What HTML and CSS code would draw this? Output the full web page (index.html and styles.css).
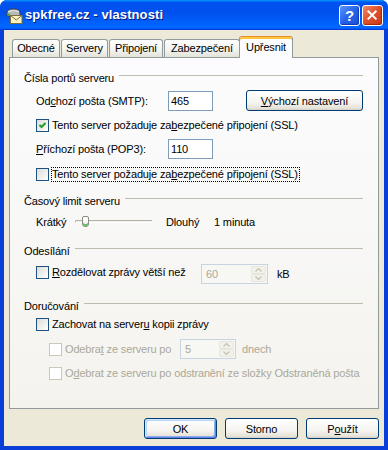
FILE: index.html
```html
<!DOCTYPE html>
<html lang="cs">
<head>
  <meta charset="UTF-8" />
  <title>spkfree.cz - vlastnosti</title>
  <link rel="stylesheet" href="styles.css">
</head>
<body>
  <div class="window">
    <div class="titlebar">
      <svg class="app-icon" viewBox="0 0 18 17">
        <path d="M2 6 Q2 2 8.5 2 Q15 2 15 6 L15 9 L2 9 Z" fill="#b9b9b9" stroke="#404040" stroke-width="1"/>
        <path d="M3 4.5 Q8.5 2.5 14 4.5" fill="none" stroke="#eeeeee" stroke-width="1"/>
        <rect x="3" y="6.5" width="2" height="1.5" fill="#19c819"/>
        <rect x="5.5" y="8.5" width="11.5" height="8" fill="#fbf3c0" stroke="#7d6f3a" stroke-width="1"/>
        <path d="M5.5 8.5 L11.25 13 L17 8.5" fill="none" stroke="#7d6f3a" stroke-width="1"/>
      </svg>
      <span class="title">spkfree.cz - vlastnosti</span>
      <div class="caption">
        <div class="cap cap-help">?</div>
        <div class="cap cap-close">
          <svg viewBox="0 0 21 21"><path d="M6 6 L14 14 M14 6 L6 14" stroke="#fff" stroke-width="2.2" stroke-linecap="square"/></svg>
        </div>
      </div>
    </div>

    <div class="frame">
      <div class="tabs">
        <div class="tab tab-general">Obecné</div>
        <div class="tab tab-servers">Servery</div>
        <div class="tab tab-conn">Připojení</div>
        <div class="tab tab-sec">Zabezpečení</div>
        <div class="tab tab-active">Upřesnit</div>
      </div>

      <div class="panel">
        <div class="group">
          <div class="group-title">Čísla portů serveru</div>
          <div class="row row-smtp">
            <span class="field-label">Od<u>c</u>hozí pošta (SMTP):</span>
            <input class="textbox port" value="465">
            <button class="btn btn-defaults"><u>V</u>ýchozí nastavení</button>
          </div>
          <div class="row check-row gap7">
            <span class="cb checked">
              <svg viewBox="0 0 11 11"><path d="M2.5 5 L4.5 7 L8.5 3" fill="none" stroke="#21a121" stroke-width="2"/></svg>
            </span>
            <span class="cb-label">Tento server požaduje za<u>b</u>ezpečené připojení (SSL)</span>
          </div>
          <div class="row row-pop">
            <span class="field-label"><u>P</u>říchozí pošta (POP3):</span>
            <input class="textbox port" value="110">
          </div>
          <div class="row check-row gap8">
            <span class="cb"></span>
            <span class="cb-label focus">Tento server požaduje za<u>b</u>ezpečené připojení (SSL)</span>
          </div>
        </div>

        <div class="group group-timeout">
          <div class="group-title">Časový limit serveru</div>
          <div class="row row-slider">
            <span class="slider-min">Krátký</span>
            <div class="slider">
              <div class="slider-track"></div>
              <div class="slider-thumb"></div>
            </div>
            <span class="slider-max">Dlouhý</span>
            <span>1 minuta</span>
          </div>
        </div>

        <div class="group group-send">
          <div class="group-title">Odesílání</div>
          <div class="row row-split">
            <div class="check-inline split-check">
              <span class="cb"></span>
              <span class="cb-label"><u>R</u>ozdělovat zprávy větší než</span>
            </div>
            <div class="spinner spinner-split">
              <input class="spin-input" value="60" disabled>
              <div class="spin-buttons">
                <span class="spin-btn"><svg viewBox="0 0 7 4"><path d="M0.5 3.5 L3.5 0.5 L6.5 3.5" fill="none" stroke="#c3c1b6" stroke-width="1.2"/></svg></span>
                <span class="spin-btn"><svg viewBox="0 0 7 4"><path d="M0.5 0.5 L3.5 3.5 L6.5 0.5" fill="none" stroke="#c3c1b6" stroke-width="1.2"/></svg></span>
              </div>
            </div>
            <span class="unit unit-kb">kB</span>
          </div>
        </div>

        <div class="group group-deliver">
          <div class="group-title">Doručování</div>
          <div class="row check-row gap5">
            <span class="cb"></span>
            <span class="cb-label">Zachovat na server<u>u</u> kopii zprávy</span>
          </div>
          <div class="row row-remove">
            <div class="check-inline remove-check">
              <span class="cb disabled"></span>
              <span class="cb-label disabled-text">Odebra<u>t</u> ze serveru po</span>
            </div>
            <div class="spinner spinner-days">
              <input class="spin-input" value="5" disabled>
              <div class="spin-buttons">
                <span class="spin-btn"><svg viewBox="0 0 7 4"><path d="M0.5 3.5 L3.5 0.5 L6.5 3.5" fill="none" stroke="#c3c1b6" stroke-width="1.2"/></svg></span>
                <span class="spin-btn"><svg viewBox="0 0 7 4"><path d="M0.5 0.5 L3.5 3.5 L6.5 0.5" fill="none" stroke="#c3c1b6" stroke-width="1.2"/></svg></span>
              </div>
            </div>
            <span class="unit disabled-text">dnech</span>
          </div>
          <div class="row check-row gap7 sub-row">
            <span class="cb disabled"></span>
            <span class="cb-label disabled-text">O<u>d</u>ebrat ze serveru po odstranění ze složky Odstraněná pošta</span>
          </div>
        </div>
      </div>

      <div class="dialog-buttons">
        <button class="btn btn-default">OK</button>
        <button class="btn">Storno</button>
        <button class="btn">P<u>o</u>užít</button>
      </div>
    </div>
  </div>
</body>
</html>
```

FILE: styles.css
```css
* { box-sizing: border-box; }
body { margin: 0; background: #fff; font-family: "Liberation Sans", Arial, sans-serif; font-size: 11px; letter-spacing: -0.15px; color: #000; }
u { text-decoration: underline; text-underline-offset: 1px; }

.window { width: 388px; height: 450px; display: flex; flex-direction: column; background: #0a3ed8; border-radius: 7px 7px 0 0; overflow: hidden; }
.titlebar { height: 30px; flex: none; display: flex; align-items: center; padding: 0 5px 0 5px; background: linear-gradient(180deg, #0997ff, #0053ee 8%, #0050ee 40%, #06f 88%, #06f 93%, #005bff 95%, #003dd7 96%, #003dd7); }
.app-icon { width: 18px; height: 17px; margin-right: 2px; flex: none; }
.title { flex: 1; color: #fff; font-weight: bold; font-size: 13px; letter-spacing: 0.1px; text-shadow: 1px 1px #0a1883; padding-bottom: 1px; }
.caption { display: flex; gap: 2px; }
.cap { width: 21px; height: 21px; border: 1px solid #fff; border-radius: 3px; display: flex; align-items: center; justify-content: center; color: #fff; }
.cap-help { background: linear-gradient(135deg, #5a93fb, #2663e8 50%, #1c4fd8); font: bold 15px "Liberation Sans", Arial, sans-serif; box-shadow: inset -1px -1px 1px #1036b8; }
.cap-close { background: linear-gradient(135deg, #ef8a6c, #e0532f 45%, #c83a18); box-shadow: inset -1px -1px 1px #a02a0c; }
.cap-close svg { width: 21px; height: 21px; }

.frame { flex: 1; margin: 0 4px 4px; background: #ece9d8; padding: 6px 5px 0 5px; display: flex; flex-direction: column; }

.tabs { display: flex; align-items: flex-end; height: 22px; margin: 0 0 -1px 3px; position: relative; z-index: 1; }
.tab { height: 18px; margin: 0 1px 1px 0; border: 1px solid #919b9c; border-bottom: none; border-radius: 3px 3px 0 0; background: linear-gradient(#fff, #f3f3ef 60%, #e3e2da); display: flex; align-items: center; justify-content: center; padding-bottom: 1px; }
.tab-general { width: 48px; }
.tab-servers { width: 47px; }
.tab-conn { width: 54px; }
.tab-sec { width: 76px; margin-right: -1px; }
.tab-active { width: 54px; height: 22px; margin: 0; background: #fcfcfe; border-top: 1px solid #e68b2c; box-shadow: inset 0 2px #ffc73c; border-radius: 3px 3px 0 0; padding-bottom: 2px; }

.panel { height: 352px; border: 1px solid #919b9c; background: linear-gradient(#fcfcfe, #f4f3ee); padding: 13px 15px 0 14px; }

.group-title { display: flex; align-items: center; height: 13px; }
.group-title::after { content: ""; flex: 1; border-top: 1px solid #bdbcb0; margin: -4px 0 0 5px; }
.group-timeout { margin-top: 12px; }
.group-send { margin-top: 12px; }
.group-deliver { margin-top: 15px; }

.row { display: flex; align-items: center; padding-left: 12px; }
.row-smtp { height: 21px; margin-top: 6px; }
.row-pop { height: 20px; margin-top: 6px; }
.check-row { height: 15px; }
.gap5 { margin-top: 5px; }
.gap7 { margin-top: 7px; }
.gap8 { margin-top: 8px; }
.sub-row { padding-left: 25px; }

.field-label { width: 132px; flex: none; }
.textbox { width: 45px; height: 20px; border: 1px solid #7f9db9; background: #fff; padding: 0 0 0 2px; font: inherit; letter-spacing: inherit; color: #000; outline: none; }

.btn { width: 73px; height: 21px; border: 1px solid #003c74; border-radius: 3px; background: linear-gradient(#fff, #f5f4f0 60%, #e6e3da 90%, #d6d0c5); font: inherit; letter-spacing: inherit; color: #000; padding: 0; }
.btn-defaults { width: 117px; margin-left: auto; }
.btn-default { box-shadow: inset 1px 1px #cee7ff, inset -1px -1px #6982ee, inset 2px 2px #bcd4f6, inset -2px -2px #89ade4; }

.cb { width: 13px; height: 13px; flex: none; border: 1px solid #1c5180; background: linear-gradient(135deg, #dcdcd7, #fff); display: flex; }
.cb svg { width: 11px; height: 11px; }
.cb.disabled { border-color: #cac8bb; background: #fff; }
.cb-label { margin-left: 3px; line-height: 13px; }
.cb-label.focus { margin-left: 2px; border: 1px dotted #000; padding: 0 1px 0 0; }
.disabled-text { color: #aca899; }

.row-slider { height: 20px; margin-top: 5px; }
.slider-min { width: 39px; flex: none; }
.slider { position: relative; width: 78px; height: 20px; flex: none; }
.slider-track { position: absolute; left: 0; right: 0; top: 8px; height: 3px; border: 1px solid #b3b1a6; border-bottom-color: #fff; border-right-color: #fff; border-radius: 2px; background: #f2f1ec; }
.slider-thumb { position: absolute; left: 7px; top: 4px; width: 7px; height: 11px; border: 1px solid #8a8d86; border-radius: 2px 2px 3px 3px; background: linear-gradient(#fff, #f0f0ea); box-shadow: inset 0 -2px #5ec35e; }
.slider-max { margin-left: 13px; width: 48px; flex: none; }

.row-split { height: 20px; margin-top: 7px; align-items: flex-start; }
.check-inline { display: flex; align-items: center; flex: none; }
.split-check { width: 165px; margin-top: 2px; }
.spinner { display: flex; height: 20px; border: 1px solid #c9d4e2; background: #f7f7f3; padding: 1px; flex: none; }
.spinner-split { width: 67px; }
.spinner-days { width: 56px; }
.spin-input { flex: 1; min-width: 0; border: none; background: transparent; font: inherit; letter-spacing: inherit; color: #aca899; padding: 0 0 0 3px; }
.spin-buttons { width: 15px; display: flex; flex-direction: column; gap: 0; }
.spin-btn { flex: 1; display: flex; align-items: center; justify-content: center; border: 1px solid #e8e6dc; border-radius: 2px; background: #f2f1ea; }
.spin-btn svg { width: 7px; height: 4px; }
.unit { margin-left: 9px; }
.unit-kb { align-self: center; }

.row-remove { height: 20px; margin-top: 7px; padding-left: 25px; }
.remove-check { width: 131px; }
.row-remove .unit { margin-left: 6px; }

.dialog-buttons { display: flex; justify-content: flex-end; gap: 8px; margin-top: 9px; }
```
